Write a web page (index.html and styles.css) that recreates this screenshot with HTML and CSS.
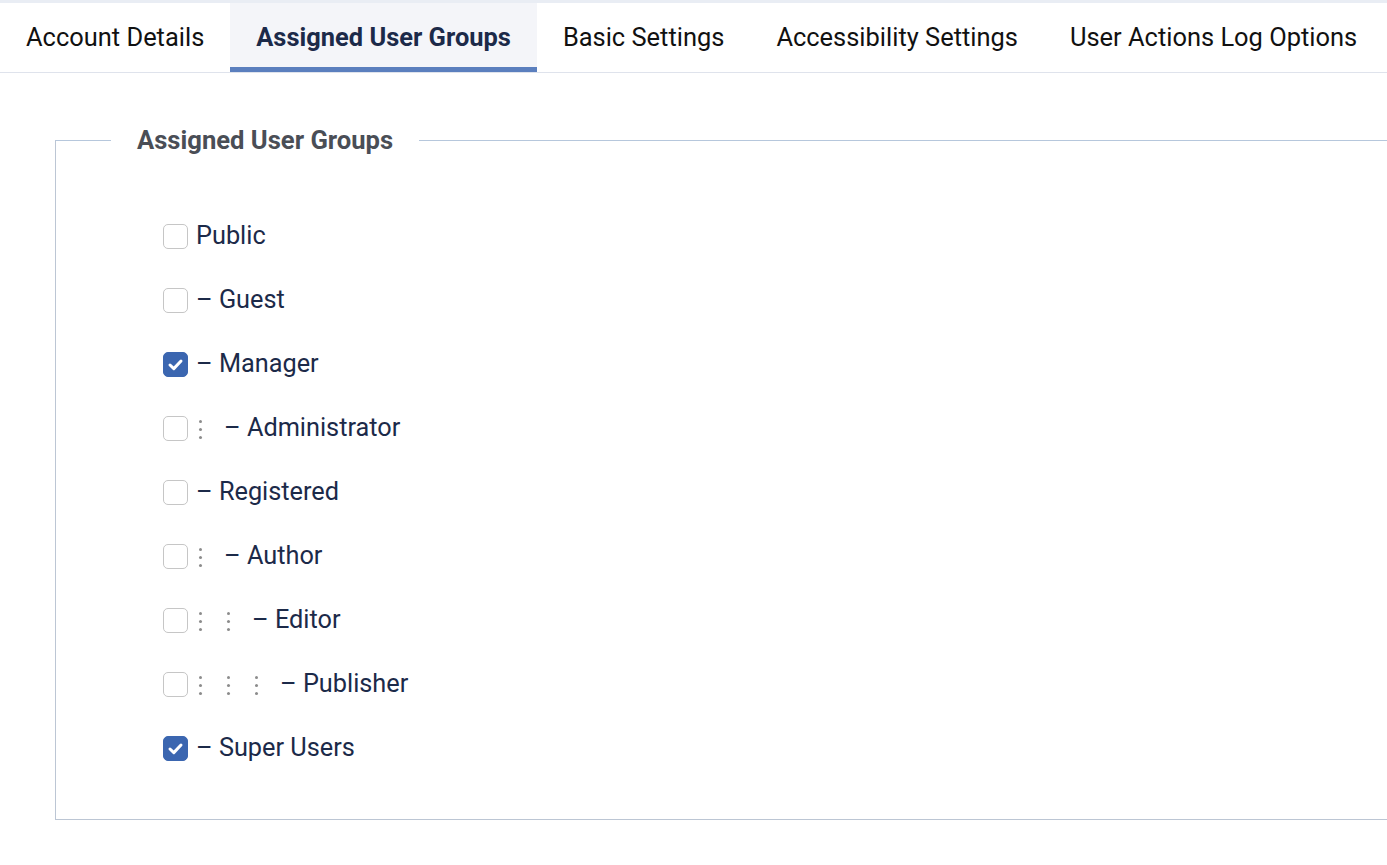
FILE: index.html
```html
<!DOCTYPE html>
<html lang="en">
<head>
<meta charset="utf-8">
<title>Assigned User Groups</title>
<link rel="stylesheet" href="styles.css">
</head>
<body>
<div class="topstrip"></div>
<nav class="tabs">
  <div class="tab">Account Details</div>
  <div class="tab active">Assigned User Groups</div>
  <div class="tab">Basic Settings</div>
  <div class="tab">Accessibility Settings</div>
  <div class="tab">User Actions Log Options</div>
</nav>
<main class="content">
  <fieldset class="groups">
    <legend>Assigned User Groups</legend>
    <ul class="list">
      <li class="row"><span class="box"></span><span class="label">Public</span></li>
      <li class="row"><span class="box"></span><span class="label">– Guest</span></li>
      <li class="row"><span class="box checked"><svg viewBox="0 0 25 25" width="25" height="25"><path d="M7 13 L10.8 16.6 L18 9" fill="none" stroke="#fff" stroke-width="3" stroke-linecap="round" stroke-linejoin="round"/></svg></span><span class="label">– Manager</span></li>
      <li class="row"><span class="box"></span><span class="lvl"></span><span class="label">– Administrator</span></li>
      <li class="row"><span class="box"></span><span class="label">– Registered</span></li>
      <li class="row"><span class="box"></span><span class="lvl"></span><span class="label">– Author</span></li>
      <li class="row"><span class="box"></span><span class="lvl"></span><span class="lvl"></span><span class="label">– Editor</span></li>
      <li class="row"><span class="box"></span><span class="lvl"></span><span class="lvl"></span><span class="lvl"></span><span class="label">– Publisher</span></li>
      <li class="row"><span class="box checked"><svg viewBox="0 0 25 25" width="25" height="25"><path d="M7 13 L10.8 16.6 L18 9" fill="none" stroke="#fff" stroke-width="3" stroke-linecap="round" stroke-linejoin="round"/></svg></span><span class="label">– Super Users</span></li>
    </ul>
  </fieldset>
</main>
</body>
</html>
```

FILE: styles.css
```css
html, body {
  margin: 0;
  padding: 0;
  background: #fff;
  overflow: hidden;
  font-family: Roboto, "Liberation Sans", sans-serif;
}

.topstrip {
  height: 3px;
  background: #e9edf4;
}

.tabs {
  display: flex;
  height: 69px;
  border-bottom: 1px solid #dfe3ec;
}

.tab {
  display: flex;
  align-items: center;
  flex: none;
  white-space: nowrap;
  padding: 0 26px 2px;
  font-size: 25.45px;
  color: #111;
  box-sizing: border-box;
  height: 69px;
}

.tab.active {
  background: #f4f5f9;
  color: #1c2a49;
  font-weight: 700;
  border-bottom: 5px solid #5b7fbe;
  padding-top: 3px;
  padding-bottom: 0;
}

.content {
  padding: 53px 0 0 55px;
}

.groups {
  margin: 0;
  width: 1500px;
  border: 1px solid #bcc6d4;
  border-top-color: #b6c7dc;
  padding: 49px 0 40px 0;
  min-width: 0;
}

.groups legend {
  margin-left: 55px;
  padding: 0 26px;
  font-size: 25.6px;
  line-height: 28px;
  font-weight: 700;
  color: #4a4e56;
}

.list {
  list-style: none;
  margin: 0;
  padding: 0 0 0 107px;
}

.row {
  display: flex;
  align-items: center;
  height: 64px;
  font-size: 25.3px;
  color: #1c2a49;
}

.box {
  width: 25px;
  height: 25px;
  box-sizing: border-box;
  border: 1px solid #c6c6c6;
  border-radius: 5px;
  margin-right: 8px;
  flex: none;
  position: relative;
  top: 1px;
}

.box.checked {
  background: #3b66b0;
  border-color: #3b66b0;
}

.box.checked svg {
  display: block;
  margin: -1px;
}

.lvl {
  width: 28px;
  height: 20px;
  flex: none;
  position: relative;
}

.lvl::before {
  content: "";
  position: absolute;
  left: 3px;
  top: 3px;
  width: 3px;
  height: 3px;
  border-radius: 50%;
  background: #8c8c8c;
  box-shadow: 0 8px 0 #8c8c8c, 0 16px 0 #8c8c8c;
}

.label {
  white-space: pre;
}
```
